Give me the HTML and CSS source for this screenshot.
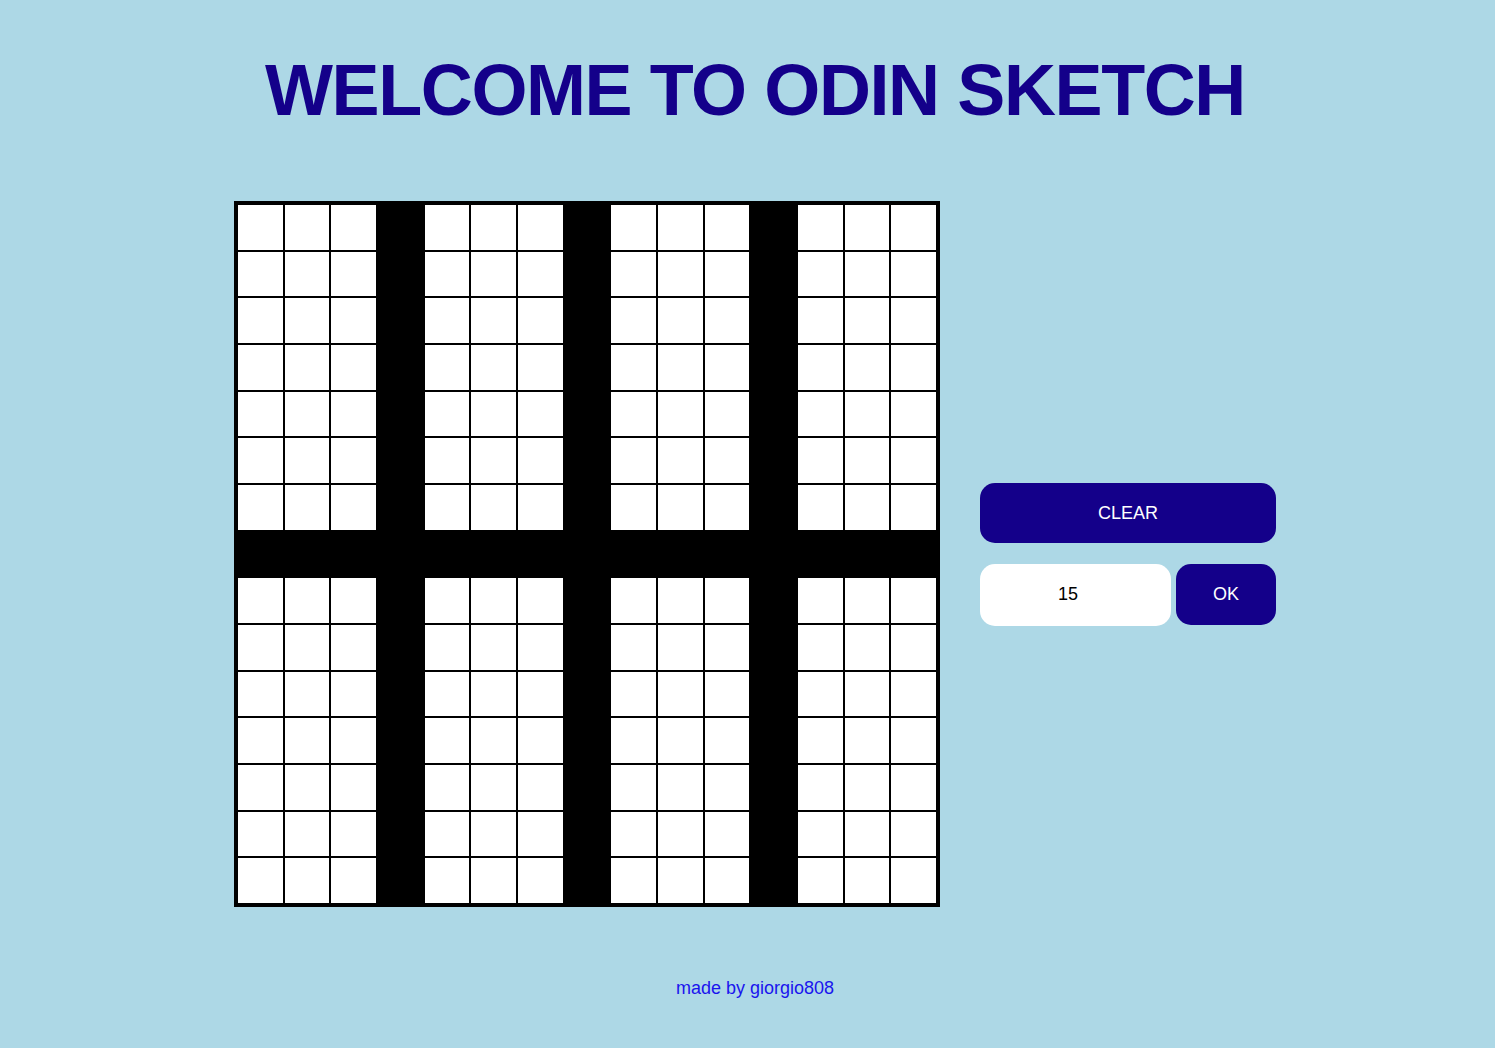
FILE: index.html
```html
<!DOCTYPE html>
<html lang="en">
<head>
<meta charset="utf-8">
<title>Odin Sketch</title>
<link rel="stylesheet" href="styles.css">
</head>
<body>
<h1 class="title">WELCOME TO ODIN SKETCH</h1>
<main class="layout">
  <div class="board">
    <div class="cell"></div><div class="cell"></div><div class="cell"></div><div class="cell on"></div><div class="cell"></div><div class="cell"></div><div class="cell"></div><div class="cell on"></div><div class="cell"></div><div class="cell"></div><div class="cell"></div><div class="cell on"></div><div class="cell"></div><div class="cell"></div><div class="cell"></div>
    <div class="cell"></div><div class="cell"></div><div class="cell"></div><div class="cell on"></div><div class="cell"></div><div class="cell"></div><div class="cell"></div><div class="cell on"></div><div class="cell"></div><div class="cell"></div><div class="cell"></div><div class="cell on"></div><div class="cell"></div><div class="cell"></div><div class="cell"></div>
    <div class="cell"></div><div class="cell"></div><div class="cell"></div><div class="cell on"></div><div class="cell"></div><div class="cell"></div><div class="cell"></div><div class="cell on"></div><div class="cell"></div><div class="cell"></div><div class="cell"></div><div class="cell on"></div><div class="cell"></div><div class="cell"></div><div class="cell"></div>
    <div class="cell"></div><div class="cell"></div><div class="cell"></div><div class="cell on"></div><div class="cell"></div><div class="cell"></div><div class="cell"></div><div class="cell on"></div><div class="cell"></div><div class="cell"></div><div class="cell"></div><div class="cell on"></div><div class="cell"></div><div class="cell"></div><div class="cell"></div>
    <div class="cell"></div><div class="cell"></div><div class="cell"></div><div class="cell on"></div><div class="cell"></div><div class="cell"></div><div class="cell"></div><div class="cell on"></div><div class="cell"></div><div class="cell"></div><div class="cell"></div><div class="cell on"></div><div class="cell"></div><div class="cell"></div><div class="cell"></div>
    <div class="cell"></div><div class="cell"></div><div class="cell"></div><div class="cell on"></div><div class="cell"></div><div class="cell"></div><div class="cell"></div><div class="cell on"></div><div class="cell"></div><div class="cell"></div><div class="cell"></div><div class="cell on"></div><div class="cell"></div><div class="cell"></div><div class="cell"></div>
    <div class="cell"></div><div class="cell"></div><div class="cell"></div><div class="cell on"></div><div class="cell"></div><div class="cell"></div><div class="cell"></div><div class="cell on"></div><div class="cell"></div><div class="cell"></div><div class="cell"></div><div class="cell on"></div><div class="cell"></div><div class="cell"></div><div class="cell"></div>
    <div class="cell on"></div><div class="cell on"></div><div class="cell on"></div><div class="cell on"></div><div class="cell on"></div><div class="cell on"></div><div class="cell on"></div><div class="cell on"></div><div class="cell on"></div><div class="cell on"></div><div class="cell on"></div><div class="cell on"></div><div class="cell on"></div><div class="cell on"></div><div class="cell on"></div>
    <div class="cell"></div><div class="cell"></div><div class="cell"></div><div class="cell on"></div><div class="cell"></div><div class="cell"></div><div class="cell"></div><div class="cell on"></div><div class="cell"></div><div class="cell"></div><div class="cell"></div><div class="cell on"></div><div class="cell"></div><div class="cell"></div><div class="cell"></div>
    <div class="cell"></div><div class="cell"></div><div class="cell"></div><div class="cell on"></div><div class="cell"></div><div class="cell"></div><div class="cell"></div><div class="cell on"></div><div class="cell"></div><div class="cell"></div><div class="cell"></div><div class="cell on"></div><div class="cell"></div><div class="cell"></div><div class="cell"></div>
    <div class="cell"></div><div class="cell"></div><div class="cell"></div><div class="cell on"></div><div class="cell"></div><div class="cell"></div><div class="cell"></div><div class="cell on"></div><div class="cell"></div><div class="cell"></div><div class="cell"></div><div class="cell on"></div><div class="cell"></div><div class="cell"></div><div class="cell"></div>
    <div class="cell"></div><div class="cell"></div><div class="cell"></div><div class="cell on"></div><div class="cell"></div><div class="cell"></div><div class="cell"></div><div class="cell on"></div><div class="cell"></div><div class="cell"></div><div class="cell"></div><div class="cell on"></div><div class="cell"></div><div class="cell"></div><div class="cell"></div>
    <div class="cell"></div><div class="cell"></div><div class="cell"></div><div class="cell on"></div><div class="cell"></div><div class="cell"></div><div class="cell"></div><div class="cell on"></div><div class="cell"></div><div class="cell"></div><div class="cell"></div><div class="cell on"></div><div class="cell"></div><div class="cell"></div><div class="cell"></div>
    <div class="cell"></div><div class="cell"></div><div class="cell"></div><div class="cell on"></div><div class="cell"></div><div class="cell"></div><div class="cell"></div><div class="cell on"></div><div class="cell"></div><div class="cell"></div><div class="cell"></div><div class="cell on"></div><div class="cell"></div><div class="cell"></div><div class="cell"></div>
    <div class="cell"></div><div class="cell"></div><div class="cell"></div><div class="cell on"></div><div class="cell"></div><div class="cell"></div><div class="cell"></div><div class="cell on"></div><div class="cell"></div><div class="cell"></div><div class="cell"></div><div class="cell on"></div><div class="cell"></div><div class="cell"></div><div class="cell"></div>
  </div>
  <div class="controls">
    <button class="btn btn-clear" type="button">CLEAR</button>
    <div class="size-row">
      <input class="size-input" type="text" value="15">
      <button class="btn btn-ok" type="button">OK</button>
    </div>
  </div>
</main>
<footer class="footer">made by giorgio808</footer>
</body>
</html>
```
FILE: styles.css
```css
html, body {
  background: #add8e6;
}
body {
  margin: 0;
  padding: 0 0 0 15px;
  font-family: "Liberation Sans", Arial, sans-serif;
}
.title {
  margin: 0;
  padding-top: 50px;
  font-size: 72px;
  line-height: 80px;
  font-weight: 700;
  letter-spacing: -1.4px;
  color: #14008a;
  text-align: center;
}
.layout {
  display: flex;
  justify-content: center;
  align-items: center;
  gap: 40px;
  margin-top: 71px;
}
.board {
  display: grid;
  grid-template-columns: repeat(15, 1fr);
  grid-template-rows: repeat(15, 1fr);
  width: 700px;
  height: 700px;
  border: 3px solid #000;
  background: #000;
}
.cell {
  box-sizing: border-box;
  border: 1px solid #000;
  background: #fff;
}
.cell.on {
  background: #000;
}
.controls {
  display: flex;
  flex-direction: column;
  gap: 21px;
  width: 296px;
}
.btn {
  border: none;
  background: #14008a;
  color: #fff;
  font-family: "Liberation Sans", Arial, sans-serif;
  font-size: 18px;
  border-radius: 15px;
  padding: 0;
}
.btn-clear {
  width: 296px;
  height: 60px;
  padding-top: 2px;
}
.size-row {
  display: flex;
  align-items: center;
  gap: 5px;
}
.size-input {
  box-sizing: border-box;
  width: 191px;
  height: 62px;
  border: none;
  border-radius: 15px;
  background: #fff;
  color: #000;
  text-align: center;
  font-family: "Liberation Sans", Arial, sans-serif;
  font-size: 18px;
  padding: 0 15px 0 0;
  outline: none;
}
.btn-ok {
  width: 100px;
  height: 61px;
}
.footer {
  margin-top: 71px;
  text-align: center;
  color: #1a14ee;
  font-size: 18px;
  line-height: 21px;
}
```
